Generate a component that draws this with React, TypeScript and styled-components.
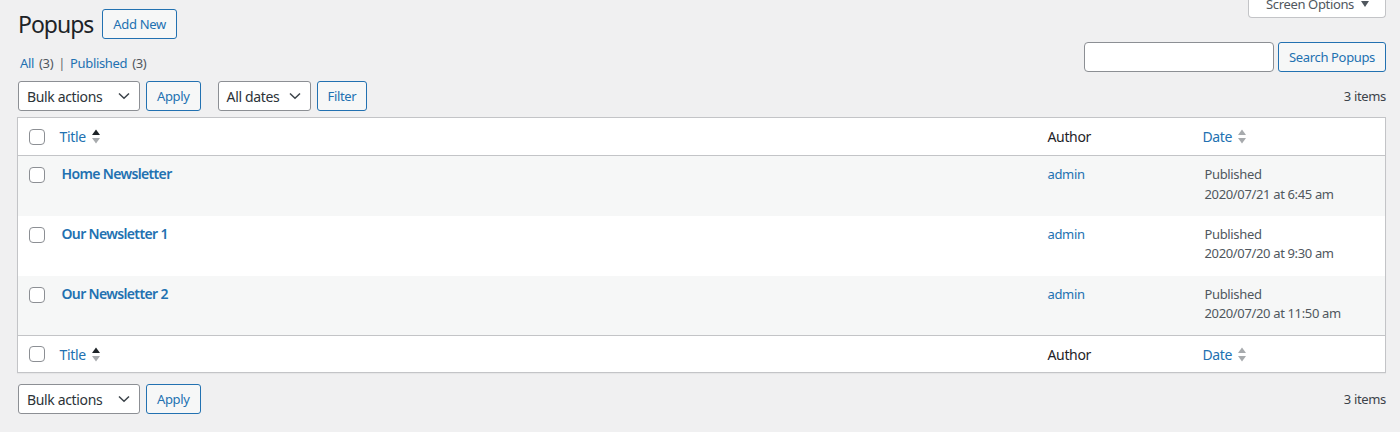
import React from "react";
import styled, { createGlobalStyle } from "styled-components";

const FONT = `"Noto Sans", "Open Sans", Roboto, sans-serif`;

const GlobalStyle = createGlobalStyle`
  html, body { margin: 0; padding: 0; }
  body {
    background: #f0f0f1;
    font-family: ${FONT};
    font-size: 13px;
    letter-spacing: -0.35px;
    color: #3c434a;
    overflow: hidden;
  }
  * { box-sizing: border-box; }
`;

const Page = styled.div`
  padding: 0 14px 0 17px;
  width: 1400px;
`;

const HeaderRow = styled.div`
  display: flex;
  align-items: flex-start;
  justify-content: space-between;
`;

const TitleGroup = styled.div`
  display: flex;
  align-items: center;
  gap: 9px;
  padding-top: 9px;
  padding-left: 1px;
`;

const Heading = styled.h1`
  margin: 0;
  font-size: 23px;
  font-weight: 400;
  line-height: 30px;
  letter-spacing: -1px;
  color: #1d2327;
`;

const Button = styled.button`
  height: 30px;
  padding: 0 10px;
  border: 1px solid #2271b1;
  border-radius: 3px;
  background: #f6f7f7;
  color: #2271b1;
  font-family: ${FONT};
  font-size: 13px;
  letter-spacing: -0.35px;
  line-height: 28px;
  cursor: pointer;
  white-space: nowrap;
`;

const ScreenOptions = styled.div`
  margin-top: -10px;
  height: 28px;
  display: flex;
  align-items: center;
  gap: 7px;
  padding: 0 16px 0 17px;
  background: #fff;
  border: 1px solid #c3c4c7;
  border-top: none;
  border-radius: 0 0 4px 4px;
  color: #50575e;
  font-size: 13px;
`;

const Caret = styled.span`
  width: 0;
  height: 0;
  border-left: 4px solid transparent;
  border-right: 4px solid transparent;
  border-top: 6px solid #50575e;
`;

const SubRow = styled.div`
  display: flex;
  align-items: flex-end;
  justify-content: space-between;
  margin-top: 3px;
`;

const SubNav = styled.ul`
  list-style: none;
  margin: 0;
  padding: 0 0 0 3px;
  display: flex;
  line-height: 18px;
  font-size: 13px;
  word-spacing: 2px;
  color: #646970;
`;

const SubItem = styled.li`
  white-space: pre;
`;

const Link = styled.a<{ $strong?: boolean }>`
  color: #2271b1;
  text-decoration: none;
  font-weight: ${(p) => (p.$strong ? 600 : 400)};
  letter-spacing: ${(p) => (p.$strong ? "-0.65px" : "inherit")};
`;

const Count = styled.span`
  color: #50575e;
`;

const SearchBox = styled.div`
  display: flex;
  gap: 4px;
`;

const SearchInput = styled.input`
  width: 190px;
  height: 30px;
  border: 1px solid #8c8f94;
  border-radius: 4px;
  background: #fff;
  font-family: ${FONT};
  font-size: 14px;
  padding: 0 8px;
`;

const TableNav = styled.div<{ $top?: boolean }>`
  display: flex;
  align-items: center;
  margin-top: ${(p) => (p.$top ? "9px" : "11px")};
  height: 30px;
  padding-left: 1px;
`;

const Actions = styled.div`
  display: flex;
  gap: 6px;
  margin-right: 17px;
`;

const Select = styled.div<{ $w: number }>`
  width: ${(p) => p.$w}px;
  height: 30px;
  display: flex;
  align-items: center;
  justify-content: space-between;
  padding: 0 9px 0 8px;
  border: 1px solid #8c8f94;
  border-radius: 3px;
  background: #fff;
  color: #2c3338;
  font-size: 14px;
`;

const Chevron = () => (
  <svg width="12" height="8" viewBox="0 0 12 8" fill="none">
    <path d="M1 1.5 L6 6.3 L11 1.5" stroke="#3c434a" strokeWidth="1.5" />
  </svg>
);

const ItemsCount = styled.div`
  margin-left: auto;
  color: #3c434a;
  font-size: 13px;
`;

const Table = styled.table`
  margin-top: 6px;
  width: 1369px;
  border: 1px solid #c3c4c7;
  border-collapse: collapse;
  table-layout: fixed;
  background: #fff;
  box-shadow: 0 1px 1px rgba(0, 0, 0, 0.04);
`;

const HeadCell = styled.th<{ $pad?: number; $foot?: boolean }>`
  height: ${(p) => (p.$foot ? 37 : 38)}px;
  padding: 0 0 0 ${(p) => p.$pad ?? 10}px;
  text-align: left;
  font-weight: 400;
  font-size: 14px;
  color: #1d2327;
  vertical-align: middle;
  ${(p) =>
    p.$foot
      ? "border-top: 1px solid #c3c4c7;"
      : "border-bottom: 1px solid #c3c4c7;"}
`;

const SortLink = styled.a`
  display: inline-flex;
  align-items: center;
  gap: 6px;
  color: #2271b1;
  text-decoration: none;
`;

const SortIcon = ({ active }: { active?: boolean }) => (
  <svg width="8" height="15" viewBox="0 0 8 15">
    <path d="M0 6 L4 0.5 L8 6 Z" fill={active ? "#1d2327" : "#a7aaad"} />
    <path d="M0 9 L4 14.5 L8 9 Z" fill="#a7aaad" />
  </svg>
);

const CheckBox = styled.span`
  display: block;
  width: 16px;
  height: 16px;
  border: 1px solid #8c8f94;
  border-radius: 4px;
  background: #fff;
`;

const Row = styled.tr<{ $alt?: boolean }>`
  background: ${(p) => (p.$alt ? "#f6f7f7" : "#fff")};
`;

const CheckCell = styled.th`
  height: 60px;
  padding: 11px 0 0 11px;
  vertical-align: top;
`;

const Cell = styled.td`
  padding: 9px 10px 0 10px;
  vertical-align: top;
  font-size: 13px;
  line-height: 19.5px;
  color: #3c434a;
`;

const RowTitle = styled.strong`
  display: block;
  font-size: 14px;
  line-height: 20px;
  font-weight: 600;
  margin-top: -1px;
`;

const DateText = styled.div`
  color: #50575e;
`;

const rows = [
  { title: "Home Newsletter", date: "2020/07/21 at 6:45 am" },
  { title: "Our Newsletter 1", date: "2020/07/20 at 9:30 am" },
  { title: "Our Newsletter 2", date: "2020/07/20 at 11:50 am" },
];

const HeaderCells = ({ foot }: { foot?: boolean }) => (
  <tr>
    <HeadCell $pad={11} $foot={foot}>
      <CheckBox />
    </HeadCell>
    <HeadCell $pad={8} $foot={foot}>
      <SortLink href="#">
        Title <SortIcon active />
      </SortLink>
    </HeadCell>
    <HeadCell $foot={foot}>Author</HeadCell>
    <HeadCell $pad={8} $foot={foot}>
      <SortLink href="#">
        Date <SortIcon />
      </SortLink>
    </HeadCell>
  </tr>
);

export default function App() {
  return (
    <Page>
      <GlobalStyle />
      <HeaderRow>
        <TitleGroup>
          <Heading>Popups</Heading>
          <Button>Add New</Button>
        </TitleGroup>
        <ScreenOptions>
          Screen Options <Caret />
        </ScreenOptions>
      </HeaderRow>
      <SubRow>
        <SubNav>
          <SubItem>
            <Link href="#">All</Link> <Count>(3)</Count> |{" "}
          </SubItem>
          <SubItem>
            <Link href="#">Published</Link> <Count>(3)</Count>
          </SubItem>
        </SubNav>
        <SearchBox>
          <SearchInput />
          <Button>Search Popups</Button>
        </SearchBox>
      </SubRow>
      <TableNav $top>
        <Actions>
          <Select $w={122}>
            Bulk actions <Chevron />
          </Select>
          <Button>Apply</Button>
        </Actions>
        <Actions>
          <Select $w={93}>
            All dates <Chevron />
          </Select>
          <Button>Filter</Button>
        </Actions>
        <ItemsCount>3 items</ItemsCount>
      </TableNav>
      <Table>
        <colgroup>
          <col style={{ width: 34 }} />
          <col />
          <col style={{ width: 157 }} />
          <col style={{ width: 191 }} />
        </colgroup>
        <thead>
          <HeaderCells />
        </thead>
        <tbody>
          {rows.map((r, i) => (
            <Row key={r.title} $alt={i % 2 === 0}>
              <CheckCell>
                <CheckBox />
              </CheckCell>
              <Cell>
                <RowTitle>
                  <Link href="#" $strong>
                    {r.title}
                  </Link>
                </RowTitle>
              </Cell>
              <Cell>
                <Link href="#">admin</Link>
              </Cell>
              <Cell>
                <DateText>Published</DateText>
                <DateText>{r.date}</DateText>
              </Cell>
            </Row>
          ))}
        </tbody>
        <tfoot>
          <HeaderCells foot />
        </tfoot>
      </Table>
      <TableNav>
        <Actions>
          <Select $w={122}>
            Bulk actions <Chevron />
          </Select>
          <Button>Apply</Button>
        </Actions>
        <ItemsCount>3 items</ItemsCount>
      </TableNav>
    </Page>
  );
}
